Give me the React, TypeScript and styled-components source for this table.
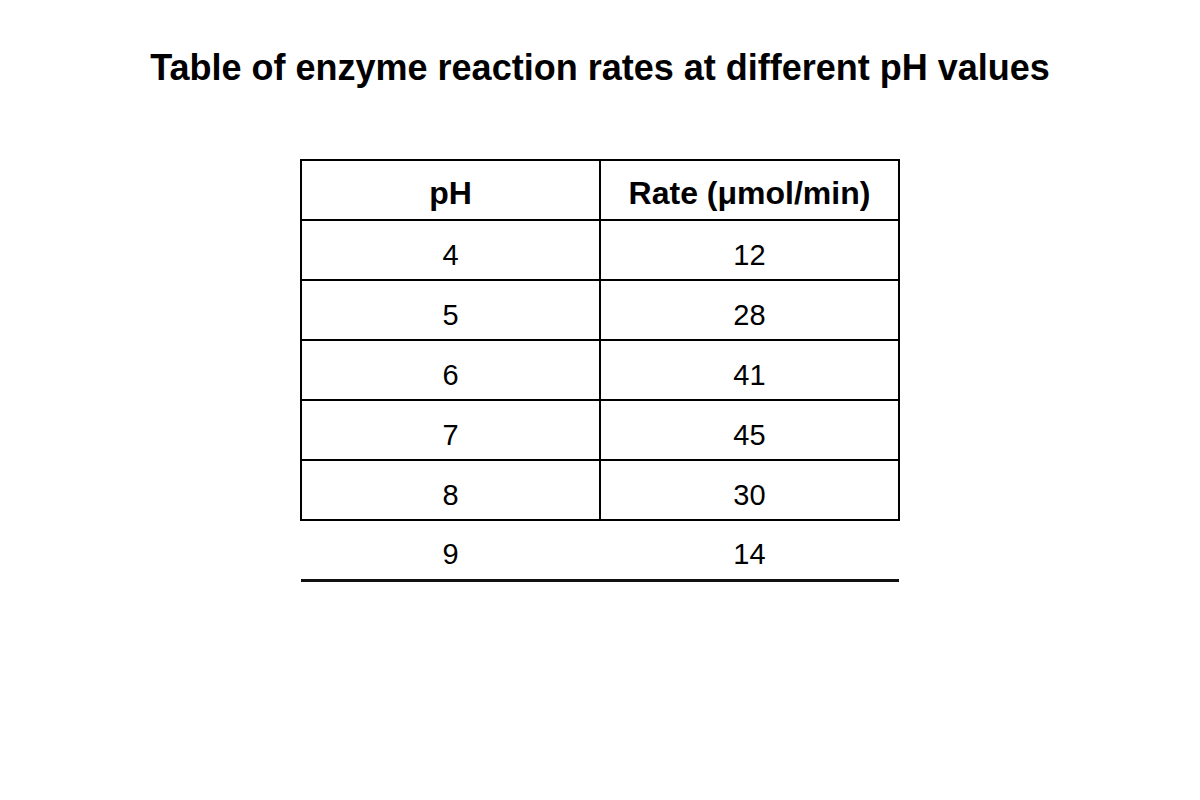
import React from "react";
import styled, { createGlobalStyle } from "styled-components";

const Global = createGlobalStyle`
  html, body { margin: 0; padding: 0; background: #fff; }
  body { font-family: "Liberation Sans", Arial, sans-serif; color: #000; }
`;

const Page = styled.div`
  width: 1200px;
  height: 800px;
  display: flex;
  flex-direction: column;
  align-items: center;
`;

const Title = styled.h1`
  margin: 45px 0 0;
  font-size: 36px;
  line-height: 46px;
  font-weight: 700;
  text-align: center;
`;

const Table = styled.table`
  margin-top: 68px;
  width: 600px;
  border-collapse: collapse;
  table-layout: fixed;
`;

const Cell = styled.td<{ $head?: boolean; $open?: boolean }>`
  height: 60px;
  padding: ${(p) => (p.$head ? "6px" : "10px")} 0 0;
  box-sizing: border-box;
  text-align: center;
  vertical-align: middle;
  font-size: ${(p) => (p.$head ? "32px" : "29px")};
  font-weight: ${(p) => (p.$head ? 700 : 400)};
  border: 2px solid #000;
  ${(p) =>
    p.$open &&
    `border-left: none; border-right: none; border-bottom: 3px solid #111;`}
`;

const rows = [
  ["4", "12"],
  ["5", "28"],
  ["6", "41"],
  ["7", "45"],
  ["8", "30"],
];

export default function App() {
  return (
    <Page>
      <Global />
      <Title>Table of enzyme reaction rates at different pH values</Title>
      <Table>
        <thead>
          <tr>
            <Cell as="th" $head>pH</Cell>
            <Cell as="th" $head>Rate (μmol/min)</Cell>
          </tr>
        </thead>
        <tbody>
          {rows.map(([a, b]) => (
            <tr key={a}>
              <Cell>{a}</Cell>
              <Cell>{b}</Cell>
            </tr>
          ))}
          <tr>
            <Cell $open>9</Cell>
            <Cell $open>14</Cell>
          </tr>
        </tbody>
      </Table>
    </Page>
  );
}
